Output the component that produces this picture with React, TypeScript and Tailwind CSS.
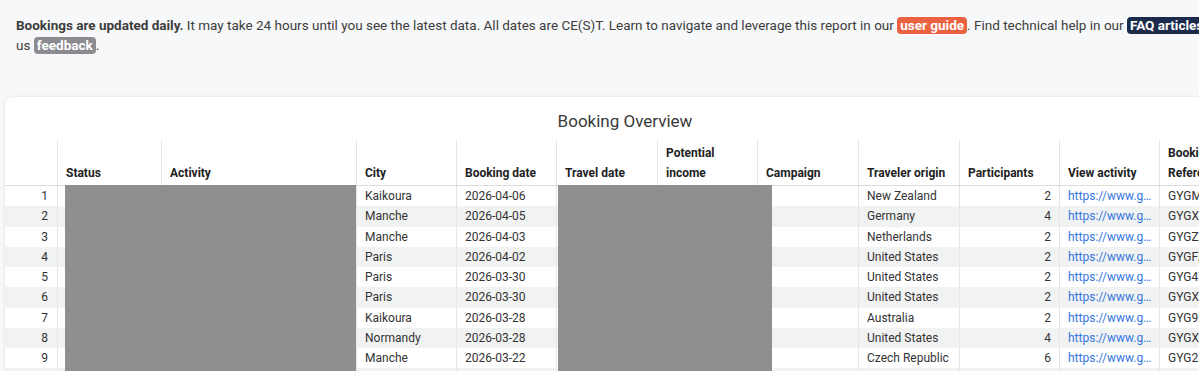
import React from "react";

const rows = [
  ["1", "Kaikoura", "2026-04-06", "New Zealand", "2", "GYGM"],
  ["2", "Manche", "2026-04-05", "Germany", "4", "GYGX"],
  ["3", "Manche", "2026-04-03", "Netherlands", "2", "GYGZ"],
  ["4", "Paris", "2026-04-02", "United States", "2", "GYGF"],
  ["5", "Paris", "2026-03-30", "United States", "2", "GYG4"],
  ["6", "Paris", "2026-03-30", "United States", "2", "GYGX"],
  ["7", "Kaikoura", "2026-03-28", "Australia", "2", "GYG9"],
  ["8", "Normandy", "2026-03-28", "United States", "4", "GYGX"],
  ["9", "Manche", "2026-03-22", "Czech Republic", "6", "GYG2"],
  ["10", "Paris", "2026-03-20", "Germany", "2", "GYGA"],
];

const cols =
  "grid grid-cols-[52px_104px_195px_100px_100px_101px_100px_101px_101px_100px_100px_100px]";

const headers = [
  "",
  "Status",
  "Activity",
  "City",
  "Booking date",
  "Travel date",
  "Potential income",
  "Campaign",
  "Traveler origin",
  "Participants",
  "View activity",
  "Booking Reference",
];

export default function App() {
  return (
    <div className="w-[1199px] h-[371px] overflow-hidden bg-[#f7f8f9] font-['Roboto',sans-serif] relative">
      <div className="pt-[16px] pl-[16px] text-[13.5px] leading-[19.5px] text-[#3d3d3d] whitespace-nowrap">
        <div>
          <span className="font-bold">Bookings are updated daily.</span> It may take 24 hours until you see the latest
          data. All dates are CE(S)T. Learn to navigate and leverage this report in our{" "}
          <span className="inline-block rounded-[4px] bg-[#ea6242] px-[3px] leading-[17px] font-bold text-white">
            user guide
          </span>
          . Find technical help in our{" "}
          <span className="inline-block rounded-[4px] bg-[#1c2a4b] px-[3px] leading-[17px] font-bold text-white">
            FAQ articles
          </span>{" "}
          or send
        </div>
        <div>
          us{" "}
          <span className="inline-block rounded-[4px] bg-[#8b8b90] px-[3px] leading-[17px] font-bold text-white">
            feedback
          </span>
          .
        </div>
      </div>

      <div className="absolute left-[5px] top-[97px] w-[1240px] h-[400px] rounded-[8px] bg-white shadow-[0_0_3px_rgba(0,0,0,0.12)]">
        <div className="h-[43px] pt-[6px] flex items-center justify-center text-[17px] text-[#3a3a3a]">
          Booking Overview
        </div>
        <div className="relative">
          <div className={`${cols} h-[46px] border-b border-[#dcdcdc]`}>
            {headers.map((h, i) => (
              <div
                key={i}
                className={`flex items-end pb-[2px] px-[8px] text-[12px] leading-[20px] font-bold text-[#222] overflow-hidden whitespace-nowrap ${
                  i > 0 ? "border-l border-[#e6e6e6]" : ""
                }`}
              >
                {h === "Potential income" ? (
                  <span>
                    Potential
                    <br />
                    income
                  </span>
                ) : h === "Booking Reference" ? (
                  <span>
                    Booking
                    <br />
                    Reference
                  </span>
                ) : (
                  h
                )}
              </div>
            ))}
          </div>
          {rows.map((r, idx) => (
            <div
              key={idx}
              className={`${cols} h-[20.25px] text-[12px] leading-[21px] text-[#333] ${
                idx % 2 === 1 ? "bg-[#f1f2f2]" : "bg-white"
              }`}
            >
              <div className="pr-[9px] text-right">{r[0]}</div>
              <div className="border-l border-[#e6e6e6]"></div>
              <div className="border-l border-[#e6e6e6]"></div>
              <div className="border-l border-[#e6e6e6] px-[8px]">{r[1]}</div>
              <div className="border-l border-[#e6e6e6] px-[8px]">{r[2]}</div>
              <div className="border-l border-[#e6e6e6]"></div>
              <div className="border-l border-[#e6e6e6]"></div>
              <div className="border-l border-[#e6e6e6]"></div>
              <div className="border-l border-[#e6e6e6] px-[8px]">{r[3]}</div>
              <div className="border-l border-[#e6e6e6] pr-[8px] text-right">{r[4]}</div>
              <div className="border-l border-[#e6e6e6] pl-[8px] pr-[3px] text-[#3476e0] overflow-hidden text-ellipsis whitespace-nowrap">
                https://www.getyourguide.com/
              </div>
              <div className="border-l border-[#e6e6e6] px-[8px] whitespace-nowrap overflow-hidden">{r[5]}X12345</div>
            </div>
          ))}
          <div className="absolute left-[60px] top-[45px] w-[291px] h-[240px] bg-[#8f8f8f]"></div>
          <div className="absolute left-[553px] top-[45px] w-[214px] h-[240px] bg-[#8f8f8f]"></div>
        </div>
      </div>
    </div>
  );
}
